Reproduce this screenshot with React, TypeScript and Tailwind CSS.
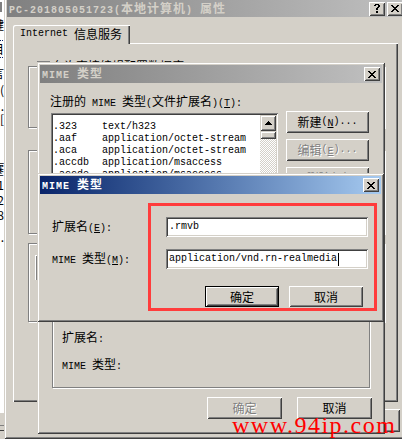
import React from "react";

const WIN =
  "shadow-[inset_1px_1px_#d4d0c8,inset_-1px_-1px_#404040,inset_2px_2px_#ffffff,inset_-2px_-2px_#808080]";
const RAISED =
  "shadow-[inset_1px_1px_#ffffff,inset_-1px_-1px_#404040,inset_2px_2px_#d4d0c8,inset_-2px_-2px_#808080]";
const SUNKEN =
  "shadow-[inset_1px_1px_#808080,inset_-1px_-1px_#ffffff,inset_2px_2px_#404040,inset_-2px_-2px_#d4d0c8]";
const ETCHED = "border border-[#808080] shadow-[inset_1px_1px_#ffffff,1px_1px_#ffffff]";
const DISABLED = "text-[#808080] [text-shadow:1px_1px_0_#ffffff]";

function runs(s: string, bold?: boolean, keyBase = "") {
  const parts = s.match(/[\x00-\x7f]+|[^\x00-\x7f]+/g) || [];
  return parts.map((p, i) => {
    const ascii = p.charCodeAt(0) < 128;
    const cls = ascii
      ? bold
        ? "font-['Liberation_Mono',monospace] text-[10px] font-bold tracking-[1px]"
        : "font-['Liberation_Mono',monospace] text-[10px]"
      : bold
        ? "font-['Noto_Sans_CJK_SC',sans-serif] text-[12px] font-bold tracking-[1px]"
        : "font-['Noto_Sans_CJK_SC',sans-serif] text-[12px]";
    return (
      <span key={keyBase + i} className={cls}>
        {p}
      </span>
    );
  });
}

function Txt({ s, bold }: { s: string; bold?: boolean }) {
  const a = s.indexOf("&");
  if (a < 0) return <>{runs(s, bold)}</>;
  return (
    <>
      {runs(s.slice(0, a), bold, "a")}
      <span className="underline underline-offset-[1px]">{runs(s.slice(a + 1, a + 2), bold, "b")}</span>
      {runs(s.slice(a + 2), bold, "c")}
    </>
  );
}

function XGlyph() {
  return (
    <svg width="8" height="7" viewBox="0 0 8 7" shapeRendering="crispEdges">
      <path
        d="M0 0h2v1H0zM6 0h2v1H6zM1 1h2v1H1zM5 1h2v1H5zM2 2h4v1H2zM3 3h2v1H3zM2 4h4v1H2zM1 5h2v1H1zM5 5h2v1H5zM0 6h2v1H0zM6 6h2v1H6z"
        fill="#000"
      />
    </svg>
  );
}

function HelpGlyph() {
  return (
    <svg width="6" height="9" viewBox="0 0 6 9" shapeRendering="crispEdges">
      <path d="M1 0h4v1H1zM0 1h2v1H0zM4 1h2v2H4zM3 3h2v1H3zM2 4h2v2H2zM2 7h2v2H2z" fill="#000" />
    </svg>
  );
}

function UpArrow() {
  return (
    <svg width="7" height="4" viewBox="0 0 7 4" shapeRendering="crispEdges">
      <path d="M3 0h1v1H3zM2 1h3v1H2zM1 2h5v1H1zM0 3h7v1H0z" fill="#000" />
    </svg>
  );
}

function CapBtn({ kind, extra = "" }: { kind: "help" | "close"; extra?: string }) {
  return (
    <div className={`flex h-[14px] w-[16px] shrink-0 items-center justify-center bg-[#d4d0c8] ${RAISED} ${extra}`}>
      {kind === "close" ? <XGlyph /> : <HelpGlyph />}
    </div>
  );
}

function TitleBar({ title, active, help, h }: { title: string; active?: boolean; help?: boolean; h: string }) {
  return (
    <div
      className={`flex ${h} items-center px-[2px] ${
        active
          ? "bg-linear-to-r from-[#0a246a] to-[#a6caf0] text-white"
          : "bg-linear-to-r from-[#808080] to-[#c0c0c0] text-[#d4d0c8]"
      }`}
    >
      <div className="flex-1 whitespace-pre leading-[12px]">
        <Txt s={title} bold />
      </div>
      {help && <CapBtn kind="help" />}
      <CapBtn kind="close" extra={help ? "ml-[2px]" : ""} />
    </div>
  );
}

function Btn({ s, w, h, disabled, def }: { s: string; w: string; h: string; disabled?: boolean; def?: boolean }) {
  return (
    <div
      className={`flex ${w} ${h} shrink-0 items-center justify-center whitespace-pre bg-[#d4d0c8] leading-[12px] ${RAISED} ${
        def ? "border border-black" : ""
      } ${disabled ? DISABLED : "text-black"}`}
    >
      <Txt s={s} />
    </div>
  );
}

function BgStrip() {
  const g = "shrink-0 whitespace-nowrap font-['Noto_Sans_CJK_SC',sans-serif] text-[12px] leading-[12px] text-black";
  const dots =
    "shrink-0 h-px w-[8px] bg-[image:repeating-linear-gradient(90deg,#0a246a_0_1px,#ffffff_1px_2px)]";
  return (
    <>
      <div className="absolute left-0 top-0 flex h-[412px] w-[4px] flex-col items-end overflow-hidden bg-white">
        <div className="h-[2px] w-[4px] shrink-0" />
        <div className="h-[10px] w-[2px] shrink-0 self-start bg-[#808080]" />
        <div className="h-[7px] shrink-0" />
        <div className={g}>键</div>
        <div className="h-[9px] shrink-0" />
        <div className={dots} />
        <div className="h-[2px] shrink-0" />
        <div className={`${g} text-[#0a246a]`}>目</div>
        <div className="h-[2px] shrink-0" />
        <div className={dots} />
        <div className="h-[9px] shrink-0" />
        <div className={g}>言</div>
        <div className="h-[5px] shrink-0" />
        <div className={g}>G(</div>
        <div className="h-[4px] shrink-0" />
        <div className={g}>.</div>
        <div className="h-[1px] shrink-0" />
        <div className={g}>[</div>
        <div className="h-[26px] shrink-0" />
        <div className={g}>_</div>
        <div className="h-[1px] shrink-0" />
        <div className={g}>蹇</div>
        <div className="h-[3px] shrink-0" />
        <div className={g}>1</div>
        <div className="h-[3px] shrink-0" />
        <div className={g}>2</div>
        <div className="h-[3px] shrink-0" />
        <div className={g}>8</div>
        <div className="h-[10px] shrink-0" />
        <div className={g}>.</div>
      </div>
      <div className="absolute left-0 top-[412px] flex w-[4px] flex-col">
        <div className="h-px bg-white" />
        <div className="h-[12px]" />
        <div className="h-px bg-[#808080]" />
        <div className="h-[4px]" />
        <div className="h-px bg-[#404040]" />
      </div>
    </>
  );
}

function OuterWindow() {
  return (
    <div className={`absolute left-[4px] top-[-3px] flex h-[442px] w-[404px] flex-col bg-[#d4d0c8] p-[3px] ${WIN}`}>
      <TitleBar title="PC-201805051723(本地计算机) 属性" help h="h-[17px]" />
      <div className="ml-[6px] mr-[7px] mt-[8px] flex flex-col">
        <div className="flex">
          <div className="relative z-10 -mb-px flex h-[19px] w-[117px] items-start whitespace-pre rounded-tl-[2px] bg-[#d4d0c8] pl-[7px] pt-[3px] leading-[12px] shadow-[inset_1px_1px_#ffffff,inset_-1px_0_#404040,inset_-2px_0_#808080]">
            <Txt s="Internet 信息服务" />
          </div>
        </div>
        <div className="relative z-0 flex h-[359px] flex-col pl-[15px] pr-[13px] pt-[23px] shadow-[inset_1px_1px_#ffffff,inset_-1px_-1px_#404040,inset_-2px_-2px_#808080]">
          <div className={`relative h-[62px] ${ETCHED}`}>
            <div className="absolute left-[8px] top-[-8px] flex items-center gap-[2px] whitespace-pre bg-[#d4d0c8] pr-[2px] leading-[12px]">
              <div className={`h-[13px] w-[13px] bg-white ${SUNKEN}`} />
              <span>
                <Txt s="允许直接编辑配置数据库(&N)" />
              </span>
            </div>
          </div>
          <div className={`mt-[22px] h-[84px] ${ETCHED}`} />
          <div className={`relative mt-[9px] h-[79px] ${ETCHED}`}>
            <div className="absolute left-[6px] top-[11px] h-[25px] w-[60px] border-l border-t border-white shadow-[inset_1px_1px_#808080]" />
          </div>
        </div>
      </div>
      <div className="mt-[7px] flex justify-end pr-[5px]">
        <Btn s="应用(&A)" w="w-[75px]" h="h-[23px]" disabled />
      </div>
    </div>
  );
}

const ROWS: [string, string][] = [
  [".323", "text/h323"],
  [".aaf", "application/octet-stream"],
  [".aca", "application/octet-stream"],
  [".accdb", "application/msaccess"],
  [".accde", "application/msaccess"],
  [".accdt", "application/msaccess"],
  [".acx", "application/internet-property-stream"],
  [".afm", "application/octet-stream"],
  [".ai", "application/postscript"],
  [".aif", "audio/x-aiff"],
  [".aifc", "audio/aiff"],
  [".aiff", "audio/aiff"],
  [".application", "application/x-ms-application"],
  [".art", "image/x-jg"],
];

function MimeListWindow() {
  return (
    <div className={`absolute left-[37px] top-[62px] flex h-[372px] w-[348px] flex-col bg-[#d4d0c8] p-[3px] ${WIN}`}>
      <TitleBar title="MIME 类型" h="h-[18px]" />
      <div className="flex flex-col px-[10px]">
        <div className="mt-[11px] h-[12px] whitespace-pre leading-[12px]">
          <Txt s="注册的 MIME 类型(文件扩展名)(&T):" />
        </div>
        <div className="mt-[5px] flex">
          <div className={`ml-[1px] mt-[2px] flex h-[176px] w-[227px] overflow-hidden bg-white p-[2px] ${SUNKEN}`}>
            <div className="flex flex-1 flex-col overflow-hidden pt-[2px]">
              {ROWS.map(([e, t]) => (
                <div key={e} className="flex h-[12px] shrink-0 whitespace-pre leading-[12px]">
                  <div className="w-[49px] shrink-0">
                    <Txt s={e} />
                  </div>
                  <div>
                    <Txt s={t} />
                  </div>
                </div>
              ))}
            </div>
            <div className="flex w-[16px] shrink-0 flex-col">
              <div className={`flex h-[16px] items-center justify-center bg-[#d4d0c8] ${WIN}`}>
                <UpArrow />
              </div>
              <div className={`h-[8px] bg-[#d4d0c8] ${WIN}`} />
              <div className="flex-1 bg-[image:repeating-conic-gradient(#ffffff_0_25%,#d4d0c8_0_50%)] bg-size-[2px_2px]" />
            </div>
          </div>
          <div className="ml-[8px] flex w-[83px] flex-col gap-[6px]">
            <Btn s="新建(&N)..." w="w-[83px]" h="h-[22px]" />
            <Btn s="编辑(&E)..." w="w-[83px]" h="h-[22px]" disabled />
            <Btn s="删除(&R)" w="w-[83px]" h="h-[22px]" disabled />
          </div>
        </div>
        <div className={`ml-[2px] mt-[11px] flex h-[88px] w-[318px] flex-col pl-[9px] pt-[29px] leading-[12px] ${ETCHED}`}>
          <div className="h-[12px] whitespace-pre">
            <Txt s="扩展名:" />
          </div>
          <div className="mt-[15px] h-[12px] whitespace-pre">
            <Txt s="MIME 类型:" />
          </div>
        </div>
        <div className="mt-[9px] flex justify-end gap-[15px]">
          <Btn s="确定" w="w-[75px]" h="h-[22px]" disabled />
          <Btn s="取消" w="w-[75px]" h="h-[22px]" />
        </div>
      </div>
    </div>
  );
}

function MimeEditWindow() {
  const field = `flex h-[20px] w-[202px] items-center whitespace-pre bg-white pl-[3px] leading-[12px] ${SUNKEN}`;
  return (
    <div className={`absolute left-[37px] top-[173px] flex h-[149px] w-[347px] flex-col bg-[#d4d0c8] p-[3px] ${WIN}`}>
      <TitleBar title="MIME 类型" active h="h-[18px]" />
      <div className="flex flex-col pl-[12px] pr-[13px]">
        <div className="mt-[23px] flex items-center">
          <div className="w-[114px] whitespace-pre leading-[12px]">
            <Txt s="扩展名(&E):" />
          </div>
          <div className={field}>
            <Txt s=".rmvb" />
          </div>
        </div>
        <div className="mt-[12px] flex items-center">
          <div className="w-[114px] whitespace-pre leading-[12px]">
            <Txt s="MIME 类型(&M):" />
          </div>
          <div className={field}>
            <Txt s="application/vnd.rn-realmedia" />
            <span className="ml-px inline-block h-[13px] w-px bg-black" />
          </div>
        </div>
        <div className="mt-[17px] flex justify-end gap-[10px] pr-[5px]">
          <Btn s="确定" w="w-[74px]" h="h-[21px]" def />
          <Btn s="取消" w="w-[74px]" h="h-[21px]" />
        </div>
      </div>
    </div>
  );
}

export default function App() {
  return (
    <div className="relative h-[439px] w-[402px] overflow-hidden bg-[#d4d0c8] text-black">
      <BgStrip />
      <OuterWindow />
      <MimeListWindow />
      <MimeEditWindow />
      <div className="absolute left-[148px] top-[203px] h-[108px] w-[229px] border-[3px] border-[#ff3c3c]" />
      <div className="absolute left-[232px] top-[413px] whitespace-nowrap font-['Liberation_Serif',serif] text-[24px] leading-[24px] tracking-[1.5px] text-[#ff0000]">
        www.94ip.com
      </div>
    </div>
  );
}
